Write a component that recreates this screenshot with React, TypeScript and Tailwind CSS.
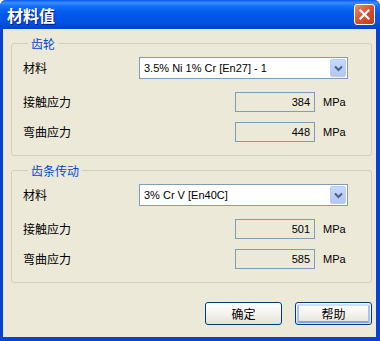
import React from "react";

const cjk = '"Noto Sans CJK SC", "Noto Sans", sans-serif';
const lat = '"Liberation Sans", "Noto Sans CJK SC", sans-serif';

function Combo({ value }: { value: string }) {
  return (
    <div className="flex h-[22px] w-[209px] items-stretch border border-[#7F9DB9] bg-white p-[1px]">
      <div className="flex flex-1 items-center pl-[3px] text-[11px] text-black" style={{ fontFamily: lat }}>
        {value}
      </div>
      <div className="flex w-[16px] items-center justify-center rounded-[2px] border border-[#BBCCF3] bg-gradient-to-b from-[#C8D8FC] to-[#B1C6F5]">
        <svg width="9" height="7" viewBox="0 0 9 7">
          <path d="M1 1.5 L4.5 5 L8 1.5" fill="none" stroke="#4D6185" strokeWidth="2" />
        </svg>
      </div>
    </div>
  );
}

function ValueRow({ label, value }: { label: string; value: string }) {
  return (
    <div className="flex items-center">
      <div className="w-[212px] text-[12px] leading-[14px] text-black" style={{ fontFamily: cjk }}>
        {label}
      </div>
      <div
        className="flex h-[20px] w-[80px] items-center justify-end border border-[#7F9DB9] bg-[#ECE9D8] pr-[4px] text-[11px] text-black"
        style={{ fontFamily: lat }}
      >
        {value}
      </div>
      <div className="ml-[8px] text-[11px] text-black" style={{ fontFamily: lat }}>
        MPa
      </div>
    </div>
  );
}

function Group({ title, material, contact, bending, className }: { title: string; material: string; contact: string; bending: string; className?: string }) {
  return (
    <fieldset className={"rounded-[3px] border border-[#D0D0BF] pl-[11px] pt-[6px] pb-[13px] " + (className ?? "")}>
      <legend
        className="ml-[5px] px-[3px] text-[12px] leading-[15px] text-[#0046D5]"
        style={{ fontFamily: cjk }}
      >
        {title}
      </legend>
      <div className="flex items-center">
        <div className="w-[116px] text-[12px] leading-[14px] text-black" style={{ fontFamily: cjk }}>
          材料
        </div>
        <Combo value={material} />
      </div>
      <div className="mt-[13px]">
        <ValueRow label="接触应力" value={contact} />
      </div>
      <div className="mt-[10px]">
        <ValueRow label="弯曲应力" value={bending} />
      </div>
    </fieldset>
  );
}

function Button({ label, def }: { label: string; def?: boolean }) {
  return (
    <div className="h-[23px] w-[77px] rounded-[3px] border border-[#003C74] bg-gradient-to-b from-[#FFFFFF] via-[#F4F3EE] to-[#E3E1D6] p-[1px]">
      <div
        className={
          "flex h-full w-full items-center justify-center rounded-[2px] text-[12px] text-black " +
          (def ? "border-2 border-[#A8C4F2] border-t-[#CEE0FD] border-b-[#7DA2E8]" : "")
        }
        style={{ fontFamily: cjk }}
      >
        {label}
      </div>
    </div>
  );
}

export default function App() {
  return (
    <div className="flex h-[341px] w-[380px] flex-col overflow-hidden rounded-t-[6px] bg-[#0842D4]">
      <div
        className="flex h-[29px] shrink-0 items-center justify-between pl-[7px] pr-[5px]"
        style={{
          background:
            "linear-gradient(to bottom, #0A5BEF 0%, #3B8CFF 10%, #1572FB 20%, #0662F4 35%, #0057E8 55%, #0054E3 75%, #0049D8 90%, #0040C8 100%)",
        }}
      >
        <div
          className="text-[16px] font-bold leading-[18px] text-white"
          style={{ fontFamily: cjk, textShadow: "1px 1px 0 #0A1883" }}
        >
          材料值
        </div>
        <div className="flex h-[21px] w-[21px] items-center justify-center rounded-[3px] border border-white bg-gradient-to-br from-[#E88B6F] via-[#D8502F] to-[#C23A1E]">
          <svg width="11" height="11" viewBox="0 0 11 11">
            <path d="M1.5 1.5 L9.5 9.5 M9.5 1.5 L1.5 9.5" stroke="white" strokeWidth="2.2" strokeLinecap="square" />
          </svg>
        </div>
      </div>
      <div className="mb-[4px] ml-[3px] mr-[4px] flex flex-1 flex-col bg-[#ECE9D8] pl-[8px] pr-[4px] pt-[7px]">
        <Group title="齿轮" material="3.5% Ni 1% Cr [En27] - 1" contact="384" bending="448" />
        <Group title="齿条传动" material="3% Cr V [En40C]" contact="501" bending="585" className="mt-[7px]" />
        <div className="mt-[19px] flex justify-end gap-[13px]">
          <Button label="确定" />
          <Button label="帮助" def />
        </div>
      </div>
    </div>
  );
}
